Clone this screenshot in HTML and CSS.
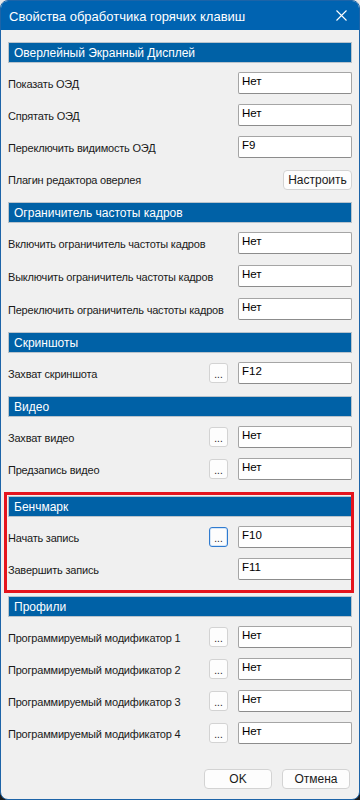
FILE: index.html
```html
<!DOCTYPE html>
<html lang="ru">
  <head>
    <meta charset="UTF-8" />
    <meta name="viewport" content="width=device-width, initial-scale=1.0" />
    <title>Свойства обработчика горячих клавиш</title>
    <link rel="stylesheet" href="styles.css">
  </head>
  <body>
    <div class="window">
      <div class="titlebar">
        <span class="title">Свойства обработчика горячих клавиш</span>
        <span class="close">
          <svg width="11" height="11" viewBox="0 0 11 11">
            <path d="M0.5 0.5 L10.5 10.5 M10.5 0.5 L0.5 10.5" stroke="#fff" stroke-width="1.1" fill="none" />
          </svg>
        </span>
      </div>

      <div class="content">
        <section class="group">
          <div class="group-header">Оверлейный Экранный Дисплей</div>
          <div class="rows">
            <div class="row">
              <span class="label">Показать ОЭД</span>
              <input class="key" type="text" value="Нет" />
            </div>
            <div class="row">
              <span class="label">Спрятать ОЭД</span>
              <input class="key" type="text" value="Нет" />
            </div>
            <div class="row">
              <span class="label">Переключить видимость ОЭД</span>
              <input class="key" type="text" value="F9" />
            </div>
            <div class="row">
              <span class="label">Плагин редактора оверлея</span>
              <button class="btn btn-setup">Настроить</button>
            </div>
          </div>
        </section>

        <section class="group group-loose">
          <div class="group-header">Ограничитель частоты кадров</div>
          <div class="rows">
            <div class="row">
              <span class="label">Включить ограничитель частоты кадров</span>
              <input class="key" type="text" value="Нет" />
            </div>
            <div class="row">
              <span class="label">Выключить ограничитель частоты кадров</span>
              <input class="key" type="text" value="Нет" />
            </div>
            <div class="row">
              <span class="label">Переключить ограничитель частоты кадров</span>
              <input class="key" type="text" value="Нет" />
            </div>
          </div>
        </section>

        <section class="group">
          <div class="group-header">Скриншоты</div>
          <div class="rows">
            <div class="row">
              <span class="label">Захват скриншота</span>
              <button class="btn btn-more">...</button>
              <input class="key" type="text" value="F12" />
            </div>
          </div>
        </section>

        <section class="group group-spaced">
          <div class="group-header">Видео</div>
          <div class="rows">
            <div class="row">
              <span class="label">Захват видео</span>
              <button class="btn btn-more">...</button>
              <input class="key" type="text" value="Нет" />
            </div>
            <div class="row">
              <span class="label">Предзапись видео</span>
              <button class="btn btn-more">...</button>
              <input class="key" type="text" value="Нет" />
            </div>
          </div>
        </section>

        <section class="group group-spaced highlight">
          <div class="group-header">Бенчмарк</div>
          <div class="rows">
            <div class="row">
              <span class="label">Начать запись</span>
              <button class="btn btn-more focused">...</button>
              <input class="key" type="text" value="F10" />
            </div>
            <div class="row">
              <span class="label">Завершить запись</span>
              <input class="key" type="text" value="F11" />
            </div>
          </div>
        </section>

        <section class="group">
          <div class="group-header">Профили</div>
          <div class="rows">
            <div class="row">
              <span class="label">Программируемый модификатор 1</span>
              <button class="btn btn-more">...</button>
              <input class="key" type="text" value="Нет" />
            </div>
            <div class="row">
              <span class="label">Программируемый модификатор 2</span>
              <button class="btn btn-more">...</button>
              <input class="key" type="text" value="Нет" />
            </div>
            <div class="row">
              <span class="label">Программируемый модификатор 3</span>
              <button class="btn btn-more">...</button>
              <input class="key" type="text" value="Нет" />
            </div>
            <div class="row">
              <span class="label">Программируемый модификатор 4</span>
              <button class="btn btn-more">...</button>
              <input class="key" type="text" value="Нет" />
            </div>
          </div>
        </section>
      </div>

      <div class="footer">
        <button class="btn btn-dialog">OK</button>
        <button class="btn btn-dialog">Отмена</button>
      </div>
    </div>
  </body>
</html>
```

FILE: styles.css
```css
* {
  margin: 0;
  padding: 0;
  box-sizing: border-box;
  font-family: "Liberation Sans", Arial, sans-serif;
}

body {
  width: 360px;
  height: 800px;
  background: linear-gradient(#e9e9e9 50%, #1b1b1b 50%);
  overflow: hidden;
}

.window {
  width: 360px;
  height: 800px;
  display: flex;
  flex-direction: column;
  background: #f0f0f0;
  border: 1px solid #1d64a8;
  border-radius: 8px;
  overflow: hidden;
}

.titlebar {
  height: 29px;
  flex-shrink: 0;
  display: flex;
  align-items: center;
  justify-content: space-between;
  padding: 0 12px 0 8px;
  background: #0063b1;
  color: #fff;
}

.title {
  font-size: 13px;
  padding-top: 1px;
}

.close {
  display: flex;
}

.content {
  padding: 12px 7px 0;
}

.group {
  position: relative;
}

.group-header {
  height: 21px;
  display: flex;
  align-items: center;
  padding-left: 5px;
  background: #0061a6;
  border: 1px solid #b9c3cc;
  color: #fff;
  font-size: 12px;
}

.rows {
  display: flex;
  flex-direction: column;
  gap: 10px;
  padding: 9px 0 12px;
}

.group-loose .rows {
  gap: 11px;
}

.group-spaced .rows {
  padding-bottom: 16px;
}

.row {
  height: 22px;
  display: grid;
  grid-template-columns: minmax(0, 1fr) 19px 114px;
  column-gap: 10px;
  align-items: center;
}

.label {
  grid-column: 1;
  white-space: nowrap;
  font-size: 11px;
  letter-spacing: -0.2px;
  color: #1a1a1a;
  padding-top: 2px;
}

.key {
  grid-column: 3;
  width: 114px;
  height: 22px;
  padding: 0 3px 4px;
  border: 1px solid #a5a5a5;
  border-bottom-color: #8c8c8c;
  border-radius: 2px;
  background: #fff;
  font-size: 11.5px;
  color: #000;
  outline: none;
}

.btn {
  background: #fdfdfd;
  border: 1px solid #d3d3d3;
  border-radius: 4px;
  color: #1a1a1a;
  font-size: 11.5px;
  cursor: pointer;
}

.btn-more {
  grid-column: 2;
  width: 19px;
  height: 20px;
  border-radius: 3px;
  font-size: 10px;
  line-height: 1;
  padding-top: 4px;
}

.btn-more.focused {
  border-color: #2f7bd0;
  box-shadow: inset 0 0 0 1px #d6e6f7;
}

.btn-setup {
  grid-column: 2 / 4;
  justify-self: end;
  width: 69px;
  height: 20px;
  margin-top: 2px;
  font-size: 12px;
}

.highlight::after {
  content: "";
  position: absolute;
  top: -4px;
  left: -4px;
  right: -2px;
  bottom: 3px;
  border: 3px solid #e5141d;
  pointer-events: none;
}

.footer {
  margin-top: auto;
  display: flex;
  justify-content: flex-end;
  gap: 10px;
  padding: 0 9px 10px;
}

.btn-dialog {
  width: 68px;
  height: 20px;
  font-size: 12px;
}
```
